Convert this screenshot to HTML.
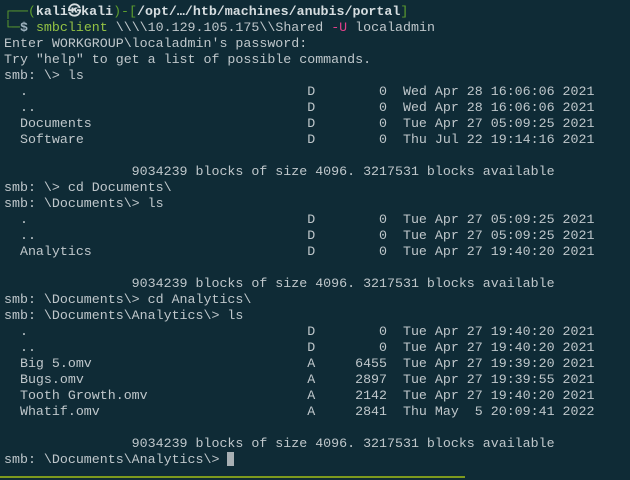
<!DOCTYPE html>
<html><head><meta charset="utf-8"><style>
html,body{margin:0;padding:0;}
body{width:630px;height:480px;overflow:hidden;background:#0f2b36;position:relative;}
pre{margin:0;padding:4px 0 0 4px;font-family:"Liberation Mono","DejaVu Sans Mono",monospace;font-size:13.3px;line-height:16px;color:#bfc7cb;white-space:pre;}
.g{color:#5e9e2e;}
.b{font-weight:bold;color:#d6dde0;}
.c{color:#93c244;}
.p{color:#e0408a;}
.d{font-weight:bold;color:#9fb3c0;}
.cur{display:inline-block;width:7px;height:14px;background:#a8b0b4;vertical-align:-3px;}
.bar{position:absolute;left:0;top:476px;width:465px;height:2px;background:#7d9a1e;}
</style></head><body>
<pre><span class="g">┌──(</span><span class="b">kali㉿kali</span><span class="g">)-[</span><span class="b">/opt/…/htb/machines/anubis/portal</span><span class="g">]</span>
<span class="g">└─</span><span class="d">$</span> <span class="c">smbclient</span> \\\\10.129.105.175\\Shared <span class="p">-U</span> localadmin
Enter WORKGROUP\localadmin's password: 
Try "help" to get a list of possible commands.
smb: \&gt; ls
  .                                   D        0  Wed Apr 28 16:06:06 2021
  ..                                  D        0  Wed Apr 28 16:06:06 2021
  Documents                           D        0  Tue Apr 27 05:09:25 2021
  Software                            D        0  Thu Jul 22 19:14:16 2021

                9034239 blocks of size 4096. 3217531 blocks available
smb: \&gt; cd Documents\
smb: \Documents\&gt; ls
  .                                   D        0  Tue Apr 27 05:09:25 2021
  ..                                  D        0  Tue Apr 27 05:09:25 2021
  Analytics                           D        0  Tue Apr 27 19:40:20 2021

                9034239 blocks of size 4096. 3217531 blocks available
smb: \Documents\&gt; cd Analytics\
smb: \Documents\Analytics\&gt; ls
  .                                   D        0  Tue Apr 27 19:40:20 2021
  ..                                  D        0  Tue Apr 27 19:40:20 2021
  Big 5.omv                           A     6455  Tue Apr 27 19:39:20 2021
  Bugs.omv                            A     2897  Tue Apr 27 19:39:55 2021
  Tooth Growth.omv                    A     2142  Tue Apr 27 19:40:20 2021
  Whatif.omv                          A     2841  Thu May  5 20:09:41 2022

                9034239 blocks of size 4096. 3217531 blocks available
smb: \Documents\Analytics\&gt; <span class="cur"></span></pre>
<div class="bar"></div>
</body></html>
